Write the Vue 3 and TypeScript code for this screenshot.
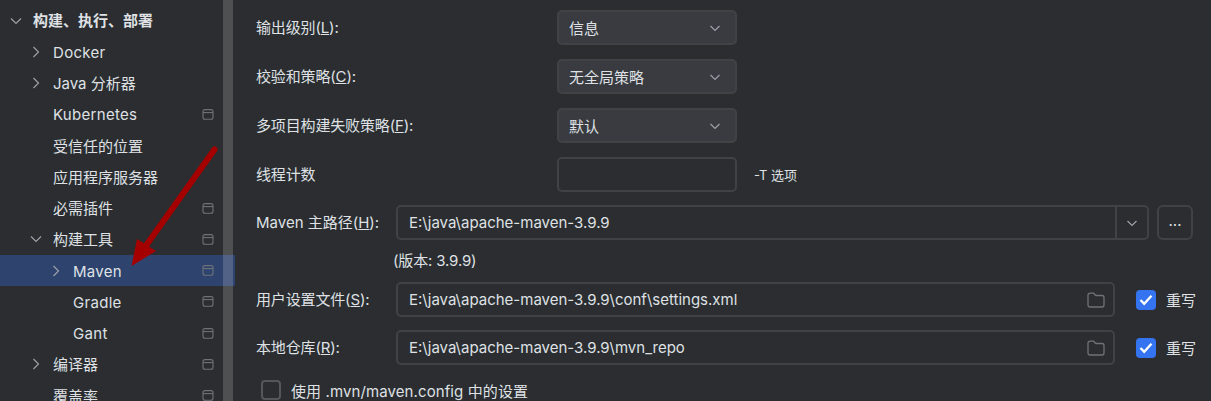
<script setup lang="ts">
interface TreeRow { label: string; depth: number; arrow?: 'open' | 'closed'; gutter?: boolean; selected?: boolean; bold?: boolean; latin?: boolean }
const rows: TreeRow[] = [
  { label: '构建、执行、部署', depth: 0, arrow: 'open', bold: true },
  { label: 'Docker', depth: 1, arrow: 'closed', latin: true },
  { label: 'Java 分析器', depth: 1, arrow: 'closed' },
  { label: 'Kubernetes', depth: 1, gutter: true, latin: true },
  { label: '受信任的位置', depth: 1 },
  { label: '应用程序服务器', depth: 1 },
  { label: '必需插件', depth: 1, gutter: true },
  { label: '构建工具', depth: 1, arrow: 'open', gutter: true },
  { label: 'Maven', depth: 2, arrow: 'closed', gutter: true, selected: true, latin: true },
  { label: 'Gradle', depth: 2, gutter: true, latin: true },
  { label: 'Gant', depth: 2, gutter: true, latin: true },
  { label: '编译器', depth: 1, arrow: 'closed', gutter: true },
  { label: '覆盖率', depth: 1, gutter: true },
]
const selects = [
  { label: '输出级别(', key: 'L', value: '信息' },
  { label: '校验和策略(', key: 'C', value: '无全局策略' },
  { label: '多项目构建失败策略(', key: 'F', value: '默认' },
]
const paths = [
  { label: '用户设置文件(', key: 'S', value: 'E:\\java\\apache-maven-3.9.9\\conf\\settings.xml' },
  { label: '本地仓库(', key: 'R', value: 'E:\\java\\apache-maven-3.9.9\\mvn_repo' },
]
</script>

<template>
  <div class="page">
    <aside class="sidebar">
      <div
        v-for="row in rows"
        :key="row.label"
        class="tree-row"
        :class="{ selected: row.selected, bold: row.bold, latin: row.latin }"
        :style="{ paddingLeft: 33 + row.depth * 20 + 'px' }"
      >
        <span class="arrow" v-if="row.arrow">
          <svg width="12" height="12" viewBox="0 0 12 12" fill="none" stroke="#9da0a8" stroke-width="1.2">
            <path v-if="row.arrow === 'open'" d="M1 3.5 6 8.5 11 3.5" />
            <path v-else d="M3.5 1 8.5 6 3.5 11" />
          </svg>
        </span>
        <span class="tree-label">{{ row.label }}</span>
        <svg v-if="row.gutter" class="gutter" width="12" height="11" viewBox="0 0 12 11" fill="none" stroke="#6f7278" stroke-width="1.1">
          <rect x="1" y="0.6" width="10" height="9.6" rx="2" />
          <path d="M1 3.6H11" />
        </svg>
      </div>
      <div class="scrollbar"></div>
    </aside>

    <main class="form">
      <div v-for="s in selects" :key="s.key" class="form-row">
        <label class="label">{{ s.label }}<u>{{ s.key }}</u>):</label>
        <div class="control select">
          <span>{{ s.value }}</span>
          <svg class="chev" width="12" height="12" viewBox="0 0 12 12" fill="none" stroke="#9da0a8" stroke-width="1.2"><path d="M1.5 4 6 8.5 10.500 4" /></svg>
        </div>
      </div>
      <div class="form-row thread">
        <label class="label">线程计数</label>
        <div class="control input-empty"></div>
        <span class="hint">-T 选项</span>
      </div>

      <div class="path-row first">
        <label class="label short maven">Maven 主路径(<u>H</u>):</label>
        <div class="control path home">
          <span class="path-text">E:\java\apache-maven-3.9.9</span>
          <span class="combo-btn">
            <svg width="12" height="12" viewBox="0 0 12 12" fill="none" stroke="#9da0a8" stroke-width="1.2"><path d="M1.500 4 6 8.500 10.500 4" /></svg>
          </span>
        </div>
        <button class="more">...</button>
      </div>
      <div class="version">(版本: 3.9.9)</div>

      <div v-for="(p, i) in paths" :key="p.key" class="path-row" :class="i === 0 ? 'settings' : 'repo'">
        <label class="label short">{{ p.label }}<u>{{ p.key }}</u>):</label>
        <div class="control path file">
          <span class="path-text">{{ p.value }}</span>
          <svg class="folder" width="18" height="16" viewBox="0 0 18 16" fill="none" stroke="#6f7278" stroke-width="1.3">
            <path d="M1 3.2C1 2 1.800 1.200 3 1.200H6.500L8.800 3.500H15C16.200 3.500 17 4.300 17 5.500V13C17 14.200 16.200 15 15 15H3C1.800 15 1 14.200 1 13Z" />
          </svg>
        </div>
        <span class="check-box on">
          <svg width="14" height="12" viewBox="0 0 14 12" fill="none" stroke="#fff" stroke-width="2.300"><path d="M1.500 6 5.200 9.800 12.500 1.800" /></svg>
        </span>
        <span class="check-label">重写</span>
      </div>

      <div class="last-row">
        <span class="check-box off"></span>
        <span class="last-text">使用 .mvn/maven.config 中的设置</span>
      </div>
    </main>

    <svg class="callout" width="240" height="290" viewBox="0 0 240 290">
      <path d="M214.500 149.500 145 247" stroke="#a50000" stroke-width="6" stroke-linecap="round" fill="none" />
      <path d="M131.500 266 137 239 156 251Z" fill="#a50000" />
    </svg>
  </div>
</template>

<style>
html, body { margin: 0; background: #2b2d30; }
</style>

<style scoped>
.page {
  position: relative;
  display: flex;
  width: 1211px;
  height: 401px;
  overflow: hidden;
  background: #2b2d30;
  color: #dfe1e5;
  font-family: Inter, "Noto Sans CJK SC", sans-serif;
  font-size: 15px;
}
.sidebar {
  position: relative;
  flex: none;
  box-sizing: border-box;
  width: 235px;
  height: 401px;
  padding-top: 5px;
  overflow: hidden;
}
.tree-row {
  position: relative;
  display: flex;
  align-items: center;
  box-sizing: border-box;
  height: 31.25px;
  padding-right: 14px;
  white-space: nowrap;
}
.tree-row.selected { background: #2e436e; }
.tree-row.bold { font-weight: 700; }
.tree-row.latin .tree-label { letter-spacing: 0.3px; }
.tree-label { flex: 1; line-height: 20px; padding-top: 2px; }
.tree-row.bold .tree-label { padding-top: 0; }
.arrow {
  display: flex;
  margin-left: -23px;
  width: 23px;
}
.gutter { flex: none; margin-right: 7px; }
.scrollbar {
  position: absolute;
  top: 0;
  bottom: 0;
  left: 223px;
  width: 10px;
  background: rgba(255, 255, 255, 0.17);
}
.form {
  flex: 1;
  min-width: 0;
  box-sizing: border-box;
  padding: 10px 0 0 21px;
  display: flex;
  flex-direction: column;
}
.form-row {
  display: flex;
  align-items: center;
  height: 35px;
  margin-bottom: 14px;
}
.form-row.thread { margin-bottom: 13px; }
.label {
  flex: none;
  width: 301px;
  font-size: 15px;
  padding-bottom: 3px;
  letter-spacing: -0.15px;
}
.label.short { width: 140px; }
.label.maven { letter-spacing: 0; }
.control {
  flex: none;
  box-sizing: border-box;
  height: 35px;
  border: 2px solid #404246;
  border-radius: 5px;
  display: flex;
  align-items: center;
}
.select {
  width: 180px;
  padding: 0 10px;
  justify-content: space-between;
  background: #393b40;
}
.input-empty { width: 180px; }
.chev { margin-right: 4px; }
.hint { margin-left: 17px; font-size: 13px; }
.path-row {
  display: flex;
  align-items: center;
  height: 35px;
}
.path-row.repo { margin-top: 13px; }
.path { padding-left: 11px; }
.path-text { flex: 1; font-size: 15px; }
.home { width: 753px; padding-right: 0; }
.file { width: 719px; padding-right: 8px; }
.combo-btn {
  display: flex;
  align-items: center;
  justify-content: center;
  width: 32px;
  height: 100%;
  border-left: 2px solid #404246;
  box-sizing: border-box;
}
.more {
  flex: none;
  box-sizing: border-box;
  width: 36px;
  height: 35px;
  margin-left: 8px;
  padding: 0 0 5px;
  background: none;
  border: 2px solid #404246;
  border-radius: 6px;
  color: #dfe1e5;
  font: inherit;
}
.version {
  height: 42px;
  margin-left: 137px;
  line-height: 42px;
  font-size: 15px;
  letter-spacing: -0.15px;
}
.check-box {
  box-sizing: border-box;
  flex: none;
  width: 20px;
  height: 20px;
  border-radius: 4px;
  display: flex;
  align-items: center;
  justify-content: center;
}
.check-box.on { background: #3574f0; margin-left: 21px; }
.check-box.off { border: 2px solid #55575c; }
.check-label { flex: none; margin-left: 10px; white-space: nowrap; }
.last-row {
  display: flex;
  align-items: center;
  gap: 10px;
  height: 20px;
  margin-top: 15px;
  margin-left: 5px;
  white-space: nowrap;
}
.last-text { letter-spacing: 0.1px; }
.callout {
  position: absolute;
  top: 0;
  left: 0;
  pointer-events: none;
}
</style>
